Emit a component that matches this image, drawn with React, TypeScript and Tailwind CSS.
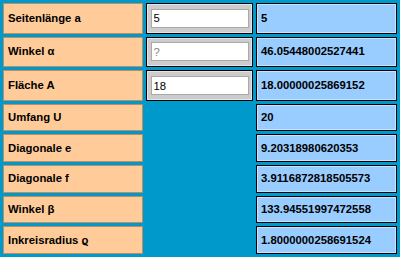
const rows: { label: string; input?: string; placeholder?: boolean; result: string }[] = [
  { label: 'Seitenlänge a', input: '5', result: '5' },
  { label: 'Winkel α', input: '?', placeholder: true, result: '46.05448002527441' },
  { label: 'Fläche A', input: '18', result: '18.00000025869152' },
  { label: 'Umfang U', result: '20' },
  { label: 'Diagonale e', result: '9.20318980620353' },
  { label: 'Diagonale f', result: '3.9116872818505573' },
  { label: 'Winkel β', result: '133.94551997472558' },
  { label: 'Inkreisradius ϱ', result: '1.8000000258691524' },
]

export default function App() {
  return (
    <div className="w-[400px] h-[257px] bg-[#0099cc] overflow-hidden font-['Liberation_Sans',Arial,sans-serif] text-[11.3px] text-black">
      <table className="w-[400px] h-[257px] table-fixed border-separate border-spacing-[3px]">
        <colgroup>
          <col className="w-[140px]" />
          <col className="w-[107px]" />
          <col className="w-[141px]" />
        </colgroup>
        <tbody>
          {rows.map((row) => (
            <tr key={row.label}>
              {/* label */}
              <td className="bg-[#ffcc99] border border-[#b98e63] pl-[4px] font-bold">{row.label}</td>

              {/* input */}
              {row.input !== undefined ? (
                <td className="bg-[#cccccc] border border-black shadow-[inset_0_0_0_1px_#e4e4e4] px-0">
                  <div className="flex justify-center">
                    <input
                      readOnly
                      value={row.placeholder ? '' : row.input}
                      placeholder={row.placeholder ? row.input : undefined}
                      className="w-[98px] h-[19px] bg-white border border-[#a9a9a9] px-[2px] text-[11.3px] text-black placeholder:text-[#808080] outline-none font-['Liberation_Sans',Arial,sans-serif]"
                    />
                  </div>
                </td>
              ) : (
                <td />
              )}

              {/* result */}
              <td className="bg-[#99ccff] border border-black shadow-[inset_0_0_0_1px_#c8e2ff] pl-[4px] font-bold">{row.result}</td>
            </tr>
          ))}
        </tbody>
      </table>
    </div>
  )
}
